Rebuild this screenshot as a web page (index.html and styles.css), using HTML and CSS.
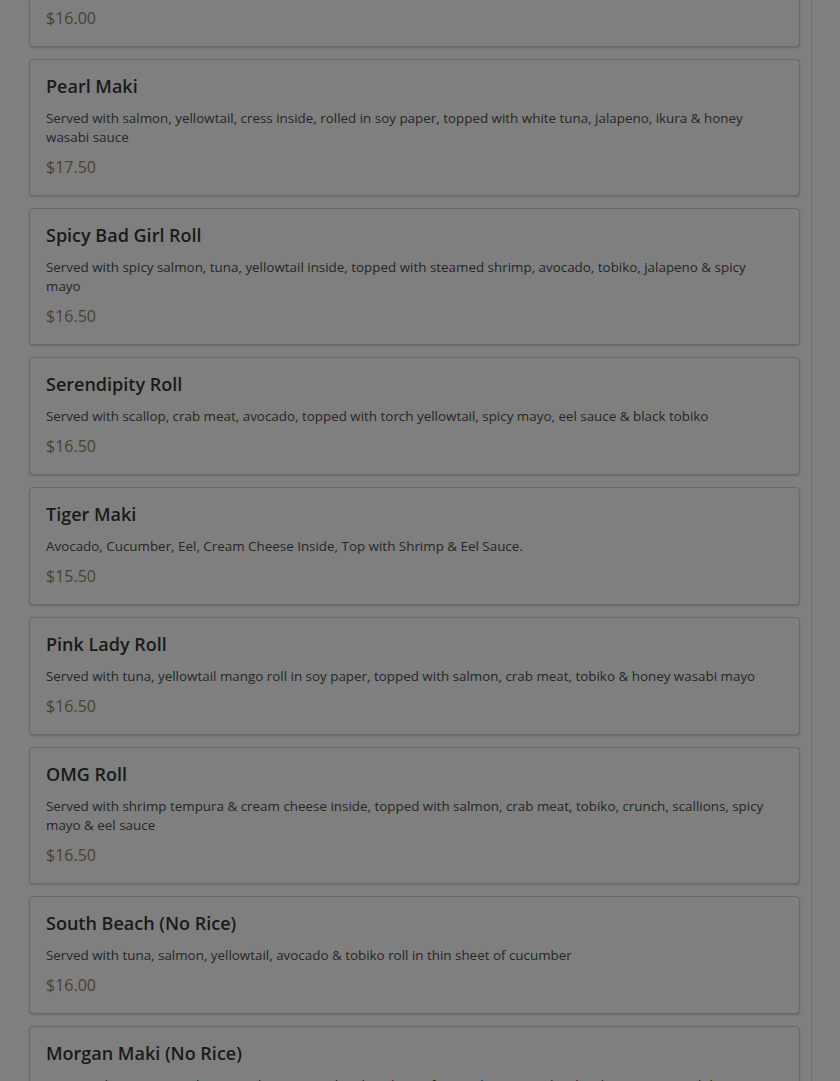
FILE: index.html
```html
<!DOCTYPE html>
<html lang="en">
<head>
<meta charset="utf-8">
<title>Menu</title>
<link rel="stylesheet" href="styles.css">
</head>
<body>
<div class="page">
  <div class="list">
    <div class="card card-tail">
      <div class="price">$16.00</div>
    </div>
    <div class="card">
      <h3 class="name">Pearl Maki</h3>
      <p class="desc">Served with salmon, yellowtail, cress inside, rolled in soy paper, topped with white tuna, jalapeno, ikura &amp; honey wasabi sauce</p>
      <div class="price">$17.50</div>
    </div>
    <div class="card">
      <h3 class="name">Spicy Bad Girl Roll</h3>
      <p class="desc">Served with spicy salmon, tuna, yellowtail inside, topped with steamed shrimp, avocado, tobiko, jalapeno &amp; spicy mayo</p>
      <div class="price">$16.50</div>
    </div>
    <div class="card">
      <h3 class="name">Serendipity Roll</h3>
      <p class="desc">Served with scallop, crab meat, avocado, topped with torch yellowtail, spicy mayo, eel sauce &amp; black tobiko</p>
      <div class="price">$16.50</div>
    </div>
    <div class="card">
      <h3 class="name">Tiger Maki</h3>
      <p class="desc">Avocado, Cucumber, Eel, Cream Cheese Inside, Top with Shrimp &amp; Eel Sauce.</p>
      <div class="price">$15.50</div>
    </div>
    <div class="card">
      <h3 class="name">Pink Lady Roll</h3>
      <p class="desc">Served with tuna, yellowtail mango roll in soy paper, topped with salmon, crab meat, tobiko &amp; honey wasabi mayo</p>
      <div class="price">$16.50</div>
    </div>
    <div class="card">
      <h3 class="name">OMG Roll</h3>
      <p class="desc">Served with shrimp tempura &amp; cream cheese inside, topped with salmon, crab meat, tobiko, crunch, scallions, spicy mayo &amp; eel sauce</p>
      <div class="price">$16.50</div>
    </div>
    <div class="card">
      <h3 class="name">South Beach (No Rice)</h3>
      <p class="desc">Served with tuna, salmon, yellowtail, avocado &amp; tobiko roll in thin sheet of cucumber</p>
      <div class="price">$16.00</div>
    </div>
    <div class="card">
      <h3 class="name">Morgan Maki (No Rice)</h3>
      <p class="desc">Snow Crab, Kani, Avocado, Cucumber wrapped in thin sheet of cucumber, topped with salmon, tuna &amp; tobiko</p>
      <div class="price">$17.00</div>
    </div>
  </div>
</div>
</body>
</html>
```

FILE: styles.css
```css
html, body {
  margin: 0;
  padding: 0;
  background: #7f7f7f;
  height: 100%;
  overflow: hidden;
}
body {
  font-family: "Open Sans", "Noto Sans", sans-serif;
}
.page {
  width: 812px;
  border-right: 1px solid #6e6e6e;
  min-height: 100%;
  box-sizing: border-box;
}
.list {
  display: flex;
  flex-direction: column;
  gap: 12px;
  padding: 0 11px 0 29px;
}
.card {
  border: 1px solid #6a6a6a;
  border-radius: 4px;
  background: #7f7f7f;
  box-shadow: 0 1px 2px rgba(0,0,0,0.18);
  padding: 15px 18px 18px 16px;
}
.card-tail {
  border-top: none;
  border-top-left-radius: 0;
  border-top-right-radius: 0;
  padding-top: 8px;
}
.name {
  margin: 0;
  font-size: 18px;
  line-height: 22px;
  font-weight: 600;
  color: #1a1a1a;
}
.desc {
  margin: 12px 0 0;
  font-size: 13.4px;
  line-height: 19px;
  color: #262626;
}
.price {
  margin-top: 10px;
  font-size: 16px;
  line-height: 20px;
  color: #4a4130;
}
.card-tail .price {
  margin-top: 0;
}
```
